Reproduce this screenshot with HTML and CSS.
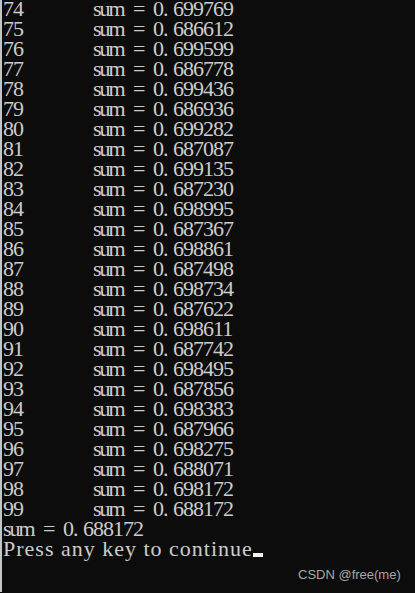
FILE: index.html
```html
<!DOCTYPE html>
<html lang="en">
<head>
    <meta charset="UTF-8">
    <meta name="viewport" content="width=device-width, initial-scale=1.0">
    <title>Console</title>
    <link rel="stylesheet" href="styles.css">
</head>
<body>
    <div class="console">
        <div class="output">
            <div class="row"><span class="idx">74</span><span class="key">sum</span><span class="eq">=</span><span class="val">0<span class="dot">.</span>699769</span></div>
            <div class="row"><span class="idx">75</span><span class="key">sum</span><span class="eq">=</span><span class="val">0<span class="dot">.</span>686612</span></div>
            <div class="row"><span class="idx">76</span><span class="key">sum</span><span class="eq">=</span><span class="val">0<span class="dot">.</span>699599</span></div>
            <div class="row"><span class="idx">77</span><span class="key">sum</span><span class="eq">=</span><span class="val">0<span class="dot">.</span>686778</span></div>
            <div class="row"><span class="idx">78</span><span class="key">sum</span><span class="eq">=</span><span class="val">0<span class="dot">.</span>699436</span></div>
            <div class="row"><span class="idx">79</span><span class="key">sum</span><span class="eq">=</span><span class="val">0<span class="dot">.</span>686936</span></div>
            <div class="row"><span class="idx">80</span><span class="key">sum</span><span class="eq">=</span><span class="val">0<span class="dot">.</span>699282</span></div>
            <div class="row"><span class="idx">81</span><span class="key">sum</span><span class="eq">=</span><span class="val">0<span class="dot">.</span>687087</span></div>
            <div class="row"><span class="idx">82</span><span class="key">sum</span><span class="eq">=</span><span class="val">0<span class="dot">.</span>699135</span></div>
            <div class="row"><span class="idx">83</span><span class="key">sum</span><span class="eq">=</span><span class="val">0<span class="dot">.</span>687230</span></div>
            <div class="row"><span class="idx">84</span><span class="key">sum</span><span class="eq">=</span><span class="val">0<span class="dot">.</span>698995</span></div>
            <div class="row"><span class="idx">85</span><span class="key">sum</span><span class="eq">=</span><span class="val">0<span class="dot">.</span>687367</span></div>
            <div class="row"><span class="idx">86</span><span class="key">sum</span><span class="eq">=</span><span class="val">0<span class="dot">.</span>698861</span></div>
            <div class="row"><span class="idx">87</span><span class="key">sum</span><span class="eq">=</span><span class="val">0<span class="dot">.</span>687498</span></div>
            <div class="row"><span class="idx">88</span><span class="key">sum</span><span class="eq">=</span><span class="val">0<span class="dot">.</span>698734</span></div>
            <div class="row"><span class="idx">89</span><span class="key">sum</span><span class="eq">=</span><span class="val">0<span class="dot">.</span>687622</span></div>
            <div class="row"><span class="idx">90</span><span class="key">sum</span><span class="eq">=</span><span class="val">0<span class="dot">.</span>698611</span></div>
            <div class="row"><span class="idx">91</span><span class="key">sum</span><span class="eq">=</span><span class="val">0<span class="dot">.</span>687742</span></div>
            <div class="row"><span class="idx">92</span><span class="key">sum</span><span class="eq">=</span><span class="val">0<span class="dot">.</span>698495</span></div>
            <div class="row"><span class="idx">93</span><span class="key">sum</span><span class="eq">=</span><span class="val">0<span class="dot">.</span>687856</span></div>
            <div class="row"><span class="idx">94</span><span class="key">sum</span><span class="eq">=</span><span class="val">0<span class="dot">.</span>698383</span></div>
            <div class="row"><span class="idx">95</span><span class="key">sum</span><span class="eq">=</span><span class="val">0<span class="dot">.</span>687966</span></div>
            <div class="row"><span class="idx">96</span><span class="key">sum</span><span class="eq">=</span><span class="val">0<span class="dot">.</span>698275</span></div>
            <div class="row"><span class="idx">97</span><span class="key">sum</span><span class="eq">=</span><span class="val">0<span class="dot">.</span>688071</span></div>
            <div class="row"><span class="idx">98</span><span class="key">sum</span><span class="eq">=</span><span class="val">0<span class="dot">.</span>698172</span></div>
            <div class="row"><span class="idx">99</span><span class="key">sum</span><span class="eq">=</span><span class="val">0<span class="dot">.</span>688172</span></div>
            <div class="row"><span class="key">sum</span><span class="eq">=</span><span class="val">0<span class="dot">.</span>688172</span></div>
            <div class="row prompt">Press any key to continue<span class="cursor"></span></div>
        </div>
        <!-- watermark over the console -->
        <div class="watermark">CSDN @free(me)</div>
    </div>
</body>
</html>
```

FILE: styles.css
```css
body {
    margin: 0;
    background: #0c0c0c;
    overflow: hidden;
}

.console {
    position: relative;
    height: 593px;
    border-left: 2px solid #c4c4c4;
    background: #0c0c0c;
}

.output {
    margin-top: -1px;
    padding-left: 1px;
    font-family: "Liberation Serif", "Times New Roman", serif;
    font-size: 22px;
    line-height: 20px;
    color: #cccccc;
}

.row {
    display: flex;
    height: 20px;
    white-space: pre;
    letter-spacing: -1px;
}

.idx {
    width: 90px;
}

.key {
    width: 40px;
    letter-spacing: -2px;
}

.eq {
    width: 20px;
}

.dot {
    display: inline-block;
    width: 10px;
}

.prompt {
    letter-spacing: 1px;
}

.cursor {
    display: inline-block;
    align-self: flex-end;
    width: 10px;
    height: 4px;
    margin-bottom: 2px;
    background: #f2f2f2;
}

.watermark {
    position: absolute;
    left: 296px;
    top: 568px;
    font-family: "Liberation Sans", Arial, sans-serif;
    font-size: 13px;
    color: #a8a8a8;
}
```
